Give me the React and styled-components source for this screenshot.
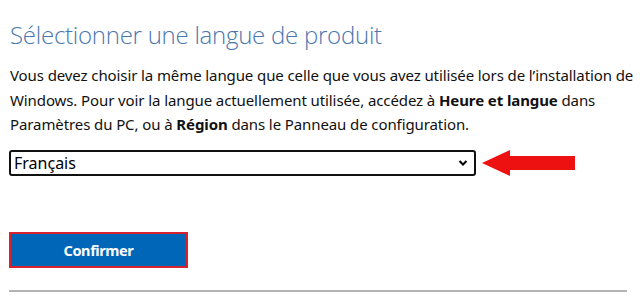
import React from "react";
import styled, { createGlobalStyle } from "styled-components";

const GlobalStyle = createGlobalStyle`
  html, body {
    margin: 0;
    padding: 0;
    background: #ffffff;
  }
  body {
    font-family: "Noto Sans", "Open Sans", sans-serif;
    color: #000;
  }
`;

const Page = styled.div`
  width: 640px;
  height: 302px;
  box-sizing: border-box;
  padding: 18px 6px 0 9px;
  overflow: hidden;
`;

const Title = styled.h2`
  margin: 0 0 0 1px;
  font-family: "Open Sans", "Noto Sans", sans-serif;
  font-weight: 300;
  font-size: 24px;
  line-height: 34px;
  color: #4a77ad;
  letter-spacing: -0.25px;
`;

const Intro = styled.p`
  margin: 11px 0 0 1px;
  font-size: 15px;
  line-height: 24.5px;
  letter-spacing: -0.1px;
  white-space: nowrap;
  color: #111;
`;

const SelectRow = styled.div`
  display: flex;
  align-items: center;
  gap: 6px;
  margin-top: 12px;
`;

const Select = styled.div`
  width: 467px;
  height: 26px;
  box-sizing: border-box;
  border: 2px solid #111;
  border-radius: 3px;
  display: flex;
  align-items: center;
  justify-content: space-between;
  padding: 0 6px 0 3px;
  font-size: 16px;
  color: #000;
`;

const Chevron = styled.svg`
  width: 10px;
  height: 8px;
`;

const Arrow = styled.svg`
  width: 94px;
  height: 28px;
`;

const Spacer = styled.div`
  height: 55px;
`;

const ConfirmButton = styled.button`
  width: 179px;
  height: 36px;
  box-sizing: border-box;
  border: 2px solid #d8232f;
  background: #0067b8;
  color: #fff;
  font-family: "Noto Sans", "Open Sans", sans-serif;
  font-weight: 700;
  font-size: 14.5px;
  letter-spacing: -0.4px;
  padding: 0;
  cursor: pointer;
`;

const Divider = styled.hr`
  width: 618px;
  margin: 22px 0 0 0;
  border: none;
  border-top: 2px solid #b4b4b4;
`;

export default function App() {
  return (
    <>
      <GlobalStyle />
      <Page>
        <Title>Sélectionner une langue de produit</Title>
        <Intro>
          Vous devez choisir la même langue que celle que vous avez utilisée lors de l’installation de
          <br />
          Windows. Pour voir la langue actuellement utilisée, accédez à <b>Heure et langue</b> dans
          <br />
          Paramètres du PC, ou à <b>Région</b> dans le Panneau de configuration.
        </Intro>
        <SelectRow>
          <Select>
            <span>Français</span>
            <Chevron viewBox="0 0 10 8">
              <path d="M1.5 2 L5 5.5 L8.5 2" fill="none" stroke="#000" strokeWidth="2" />
            </Chevron>
          </Select>
          <Arrow viewBox="0 0 94 28">
            <polygon points="0,14 28,1 28,7 93,7 93,21 28,21 28,27" fill="#ee1111" />
          </Arrow>
        </SelectRow>
        <Spacer />
        <ConfirmButton>Confirmer</ConfirmButton>
        <Divider />
      </Page>
    </>
  );
}
